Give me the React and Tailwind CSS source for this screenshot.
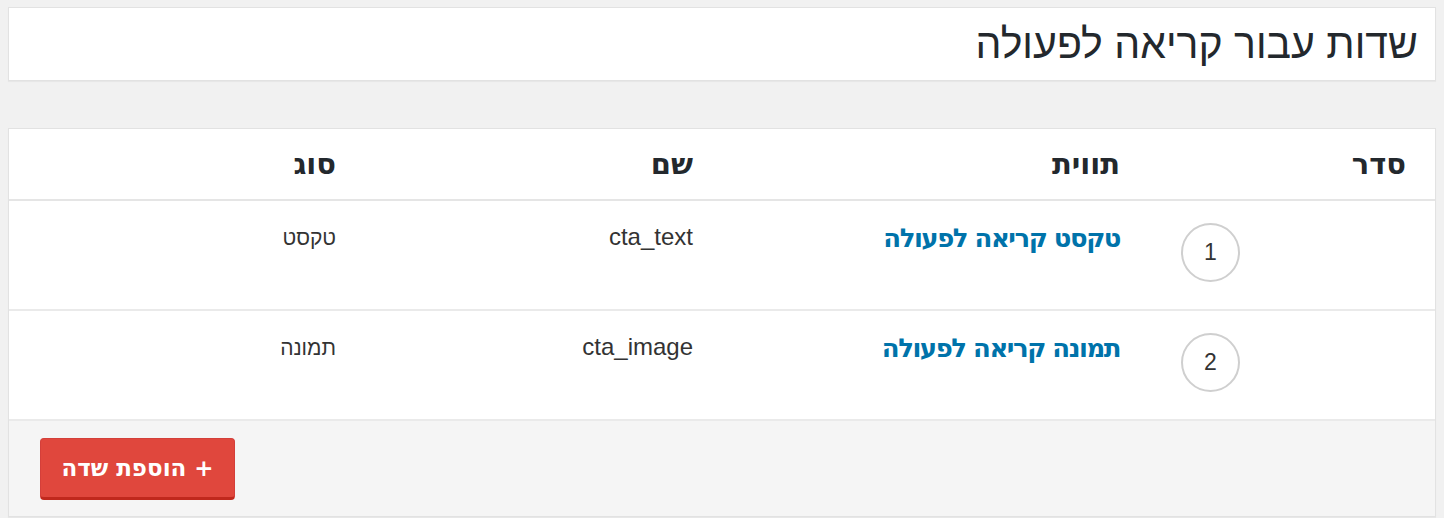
import React from "react";

const rows = [
  { n: 1, label: "טקסט קריאה לפעולה", name: "cta_text", type: "טקסט" },
  { n: 2, label: "תמונה קריאה לפעולה", name: "cta_image", type: "תמונה" },
];

const bold = { fontFamily: '"DejaVu Sans", "Liberation Sans", sans-serif' };

export default function App() {
  return (
    <div
      dir="rtl"
      className="min-h-[518px] bg-[#f1f1f1] px-[8px] pt-[7px]"
      style={{ fontFamily: '"Liberation Sans", "DejaVu Sans", sans-serif' }}
    >
      <div className="flex h-[74px] items-center border border-[#e2e2e2] bg-white pr-[17px] shadow-[0_1px_1px_rgba(0,0,0,0.04)]">
        <h1 className="text-[41px] font-normal leading-none text-[#23282d]">
          שדות עבור קריאה לפעולה
        </h1>
      </div>

      <div className="mt-[47px] border border-[#e2e2e2] bg-white shadow-[0_1px_1px_rgba(0,0,0,0.04)]">
        <div
          style={bold}
          className="grid h-[72px] grid-cols-[286px_427px_357px_1fr] items-center border-b-2 border-[#e5e5e5] text-[29px] font-bold leading-none text-[#23282d]"
        >
          <div className="pr-[29px]">סדר</div>
          <div className="pr-[29px]">תווית</div>
          <div className="pr-[29px]">שם</div>
          <div className="pr-[29px]">סוג</div>
        </div>
        {rows.map((r) => (
          <div
            key={r.n}
            className="grid h-[110px] grid-cols-[286px_427px_357px_1fr] border-b-2 border-[#eaeaea] pt-[22px]"
          >
            <div className="flex justify-end pl-[32px]">
              <div className="flex h-[59px] w-[59px] items-center justify-center rounded-full border-2 border-[#cfcfcf] text-[23px] leading-none text-[#333]">
                {r.n}
              </div>
            </div>
            <div
              style={bold}
              className="pr-[29px] text-[26px] font-bold leading-[30px] tracking-[-1.5px] text-[#0073aa]"
            >
              {r.label}
            </div>
            <div className="pr-[29px] text-[24px] leading-[28px] text-[#333]">
              {r.name}
            </div>
            <div className="pr-[29px] pt-[2px] text-[21px] leading-[26px] text-[#333]">
              {r.type}
            </div>
          </div>
        ))}
        <div className="flex h-[95px] items-start justify-end bg-[#f5f5f5] pl-[31px] pt-[17px]">
          <button
            style={bold}
            className="flex h-[62px] w-[195px] items-center justify-center rounded-[4px] border border-[#d43f3a] border-b-[3px] border-b-[#c0281d] bg-[#e0473d] text-[23px] font-bold text-white"
          >
            + הוספת שדה
          </button>
        </div>
      </div>
    </div>
  );
}
